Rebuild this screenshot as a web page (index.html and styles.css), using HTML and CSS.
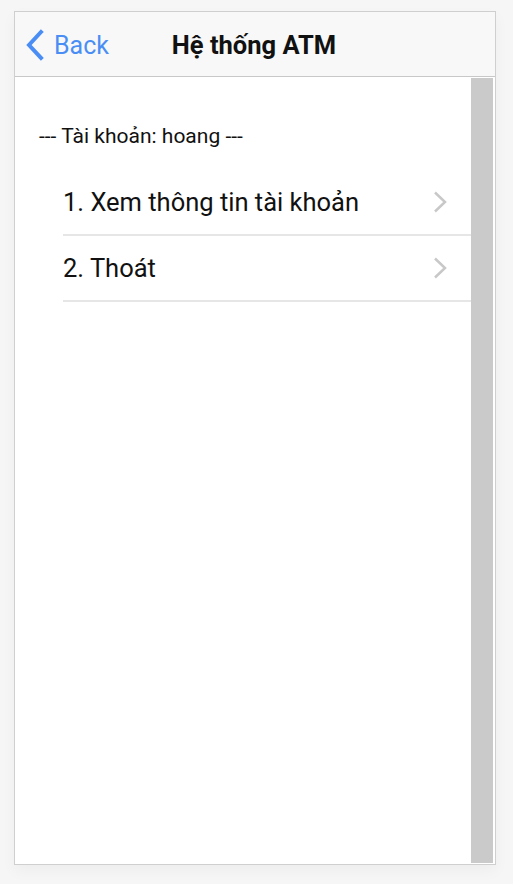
FILE: index.html
```html
<!DOCTYPE html>
<html lang="vi">
<head>
<meta charset="utf-8">
<title>Hệ thống ATM</title>
<link rel="stylesheet" href="styles.css">
</head>
<body>
<div class="frame">
  <header class="navbar">
    <a class="back">
      <svg class="back-icon" width="20" height="32" viewBox="0 0 20 32"><path d="M16 3 L4 16 L16 29" fill="none" stroke="#4a8ef5" stroke-width="4" stroke-linecap="square" stroke-linejoin="miter"/></svg>
      <span class="back-text">Back</span>
    </a>
    <h1 class="title">Hệ thống ATM</h1>
  </header>
  <div class="body">
    <main class="content">
      <p class="label">--- Tài khoản: hoang ---</p>
      <ul class="list">
        <li class="item"><span>1. Xem thông tin tài khoản</span><svg class="chev" width="14" height="22" viewBox="0 0 14 22"><path d="M2 1.5 L12 11 L2 20.5" fill="none" stroke="#c8c8c8" stroke-width="2.5"/></svg></li>
        <li class="item"><span>2. Thoát</span><svg class="chev" width="14" height="22" viewBox="0 0 14 22"><path d="M2 1.5 L12 11 L2 20.5" fill="none" stroke="#c8c8c8" stroke-width="2.5"/></svg></li>
      </ul>
    </main>
    <div class="scrollbar"></div>
  </div>
</div>
</body>
</html>
```
FILE: styles.css
```css
html, body { margin: 0; padding: 0; }
body {
  background: #f6f6f6;
  font-family: Roboto, "Noto Sans", sans-serif;
  width: 513px;
  height: 884px;
  overflow: hidden;
  padding: 11px 0 0 14px;
  box-sizing: border-box;
}
.frame {
  width: 482px;
  height: 854px;
  border: 1px solid #cfcfcf;
  box-sizing: border-box;
  background: #fff;
  box-shadow: 0 6px 14px rgba(0,0,0,0.04);
  display: flex;
  flex-direction: column;
}
.navbar {
  height: 65px;
  flex: none;
  box-sizing: border-box;
  background: #f8f8f8;
  border-bottom: 1px solid #c8c8c8;
  position: relative;
  display: flex;
  align-items: center;
  padding-top: 2px;
}
.back {
  display: flex;
  align-items: center;
  padding-left: 10px;
  color: #4a8ef5;
  font-size: 25px;
  gap: 9px;
}
.back-icon { display: block; }
.back-text { line-height: 1; }
.title {
  position: absolute;
  left: 0; right: 0;
  text-align: center;
  margin: 0;
  font-size: 25.5px;
  font-weight: 700;
  color: #111;
  pointer-events: none;
  padding-right: 2px;
}
.body {
  flex: 1;
  display: flex;
  padding: 1px 2px 1px 0;
}
.content { flex: 1; }
.scrollbar {
  width: 22px;
  background: #cacaca;
  flex: none;
}
.label {
  margin: 45px 0 0 24px;
  font-size: 21px;
  line-height: 26px;
  color: #111;
}
.list {
  list-style: none;
  margin: 21px 0 0 48px;
  padding: 0;
}
.item {
  height: 66px;
  box-sizing: border-box;
  border-bottom: 2px solid #e6e6e6;
  display: flex;
  align-items: center;
  justify-content: space-between;
  font-size: 25.5px;
  color: #111;
  padding-right: 24px;
  padding-bottom: 1px;
}
.chev { display: block; }
```
